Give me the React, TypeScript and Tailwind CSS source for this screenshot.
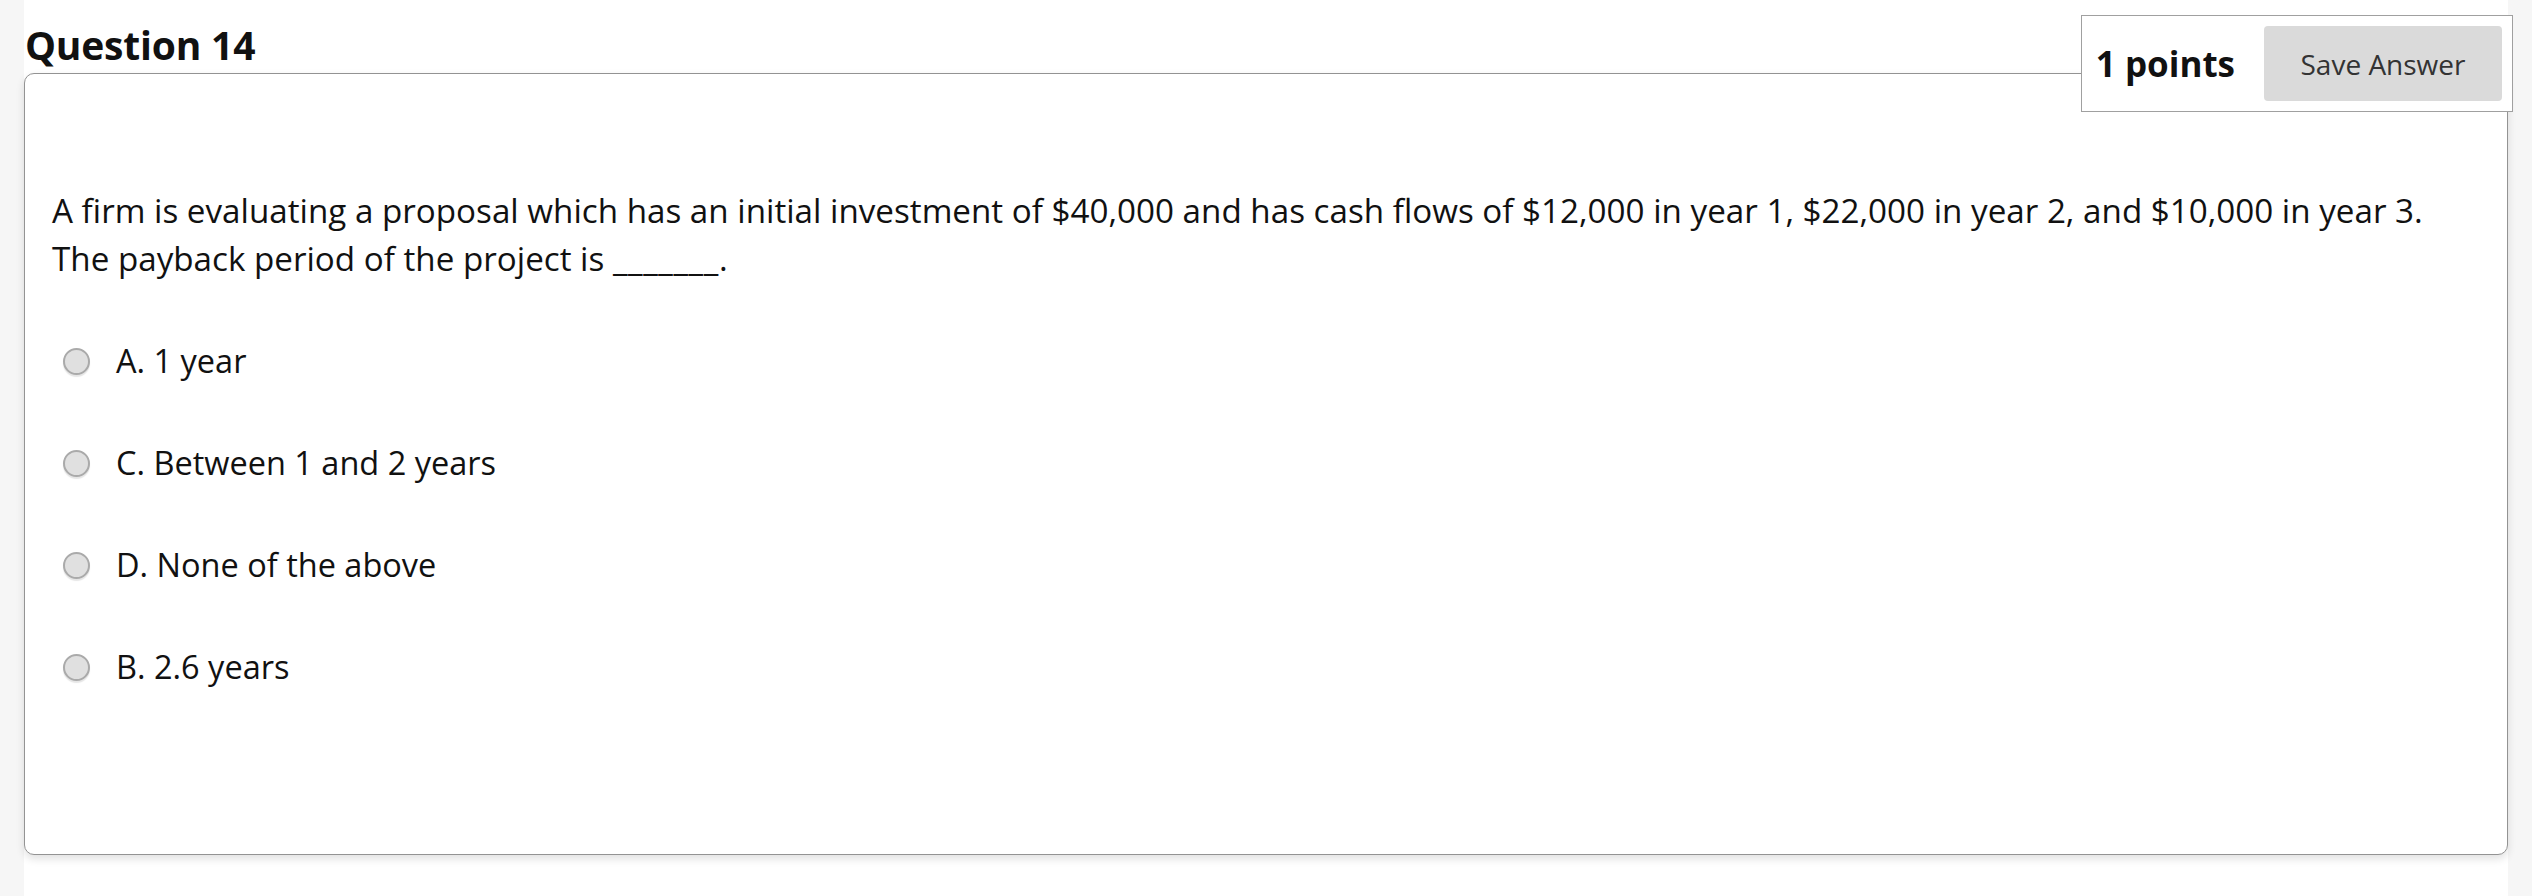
import React from "react";

const options = ["A. 1 year", "C. Between 1 and 2 years", "D. None of the above", "B. 2.6 years"];

export default function App() {
  return (
    <div
      className="flex w-[2532px] h-[896px] bg-[#f6f6f6] text-[#111111]"
      style={{ fontFamily: '"Open Sans", "Noto Sans", sans-serif' }}
    >
      <div className="w-[24px] shrink-0" />
      <div className="relative flex-1 bg-white pt-[21px]">
        <h2 className="text-[39px] leading-[48px] font-bold tracking-[-0.2px] pl-[1px]">Question 14</h2>
        <div className="mt-[4px] h-[782px] rounded-[10px] border-[1.5px] border-[#939393] bg-white shadow-[0_4px_8px_rgba(0,0,0,0.12)] pl-[27px] pt-[113px] pr-[20px]">
          <p className="text-[33.2px] leading-[48px]">
            A firm is evaluating a proposal which has an initial investment of $40,000 and has cash flows of $12,000 in year 1, $22,000 in year 2, and $10,000 in year 3.
            <br />
            The payback period of the project is <span className="tracking-[0.6px]">_______</span>.
          </p>
          <div className="mt-[58px] flex flex-col gap-[62px]">
            {options.map((o) => (
              <label key={o} className="flex items-center h-[40px]">
                <span className="ml-[11px] w-[27px] h-[27px] rounded-full border-2 border-[#aaaaaa] bg-[#e0e0e0] shadow-[0_2px_1px_rgba(0,0,0,0.1)]" />
                <span className="ml-[26px] text-[32.5px] leading-[40px]">{o}</span>
              </label>
            ))}
          </div>
        </div>
        <div className="absolute top-[15px] right-[-5px] flex items-center border border-[#a0a0a0] bg-white pl-[14px] pr-[10px] py-[10px]">
          <span className="text-[35px] font-bold leading-[48px] mr-[29px]">1 points</span>
          <button className="w-[238px] h-[75px] rounded-[4px] bg-[#dadada] text-[28px] text-[#333333]">
            Save Answer
          </button>
        </div>
      </div>
      <div className="w-[24px] shrink-0" />
    </div>
  );
}
